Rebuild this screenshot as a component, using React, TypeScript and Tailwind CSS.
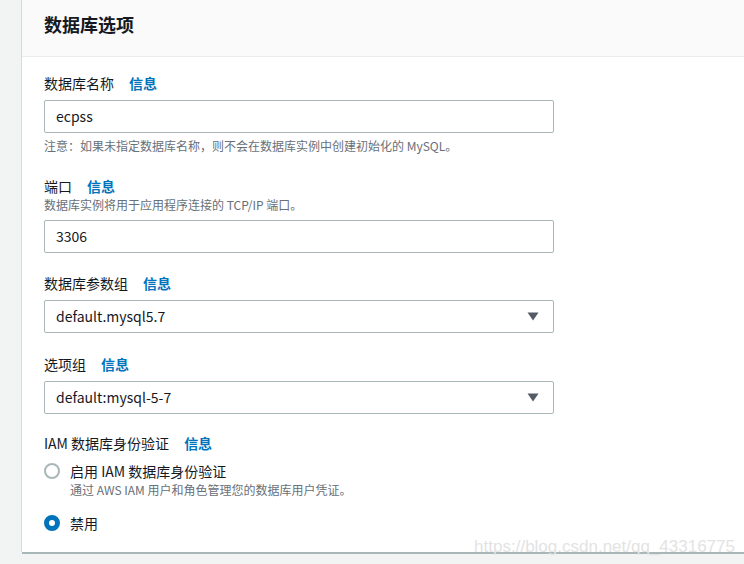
import React from "react";

const font = { fontFamily: '"Noto Sans CJK SC", "Noto Sans", sans-serif' };

function Label({ text }: { text: string }) {
  return (
    <div className="flex items-center text-[14px] leading-[22px] text-[#16191f]">
      <span>{text}</span>
      <span className="ml-[15px] font-bold text-[#0073bb]">信息</span>
    </div>
  );
}

function TextInput({ value }: { value: string }) {
  return (
    <div className="flex h-[33px] w-[510px] items-center rounded-[2px] border border-[#aab7b8] bg-white pl-[11px] text-[14px] text-[#16191f]">
      {value}
    </div>
  );
}

function Select({ value }: { value: string }) {
  return (
    <div className="flex h-[33px] w-[510px] items-center justify-between rounded-[2px] border border-[#aab7b8] bg-white pl-[11px] pr-[14px] text-[14px] text-[#16191f]">
      <span>{value}</span>
      <svg width="12" height="9" viewBox="0 0 12 9">
        <path d="M0.5 0.5 L11.5 0.5 L6 8.5 Z" fill="#545b64" />
      </svg>
    </div>
  );
}

export default function App() {
  return (
    <div
      className="relative h-[564px] w-[744px] overflow-hidden bg-[#f2f3f3] pl-[22px]"
      style={font}
    >
      <div className="h-[552px] w-[760px] bg-white shadow-[0_2px_0_0_#aab7b8,-1px_0_0_0_#d5dbdb]">
        <div className="h-[57px] border-b border-[#eaeded] bg-[#fafafa] pl-[22px] pt-[12px]">
          <div className="text-[18px] font-bold leading-[24px] text-[#16191f]">数据库选项</div>
        </div>
        <div className="pl-[22px] pt-[15px]">
          <Label text="数据库名称" />
          <div className="mt-[6px]">
            <TextInput value="ecpss" />
          </div>
          <div className="mt-[5px] text-[12px] leading-[16px] text-[#687078]">
            注意：如果未指定数据库名称，则不会在数据库实例中创建初始化的 MySQL。
          </div>

          <div className="mt-[21px]">
            <Label text="端口" />
          </div>
          <div className="text-[12px] leading-[16px] text-[#687078]">
            数据库实例将用于应用程序连接的 TCP/IP 端口。
          </div>
          <div className="mt-[7px]">
            <TextInput value="3306" />
          </div>

          <div className="mt-[19px]">
            <Label text="数据库参数组" />
          </div>
          <div className="mt-[6px]">
            <Select value="default.mysql5.7" />
          </div>

          <div className="mt-[20px]">
            <Label text="选项组" />
          </div>
          <div className="mt-[6px]">
            <Select value="default:mysql-5-7" />
          </div>

          <div className="mt-[18px]">
            <Label text="IAM 数据库身份验证" />
          </div>
          <div className="mt-[6px] flex items-start">
            <div className="mt-[3px] h-[16px] w-[16px] rounded-full border-2 border-[#aab7b8] bg-white" />
            <div className="ml-[10px]">
              <div className="text-[14px] leading-[22px] text-[#16191f]">启用 IAM 数据库身份验证</div>
              <div className="text-[12px] leading-[16px] text-[#687078]">
                通过 AWS IAM 用户和角色管理您的数据库用户凭证。
              </div>
            </div>
          </div>
          <div className="mt-[14px] flex items-center">
            <div className="h-[16px] w-[16px] rounded-full border-[5px] border-[#0073bb] bg-white" />
            <div className="ml-[10px] text-[14px] leading-[22px] text-[#16191f]">禁用</div>
          </div>
        </div>
      </div>
      <div
        className="absolute right-[9px] top-[536px] text-[17px] leading-[22px] text-[#e3e3e3]"
        style={{ fontFamily: '"Liberation Sans", Arial, sans-serif' }}
      >
        https://blog.csdn.net/qq_43316775
      </div>
    </div>
  );
}
